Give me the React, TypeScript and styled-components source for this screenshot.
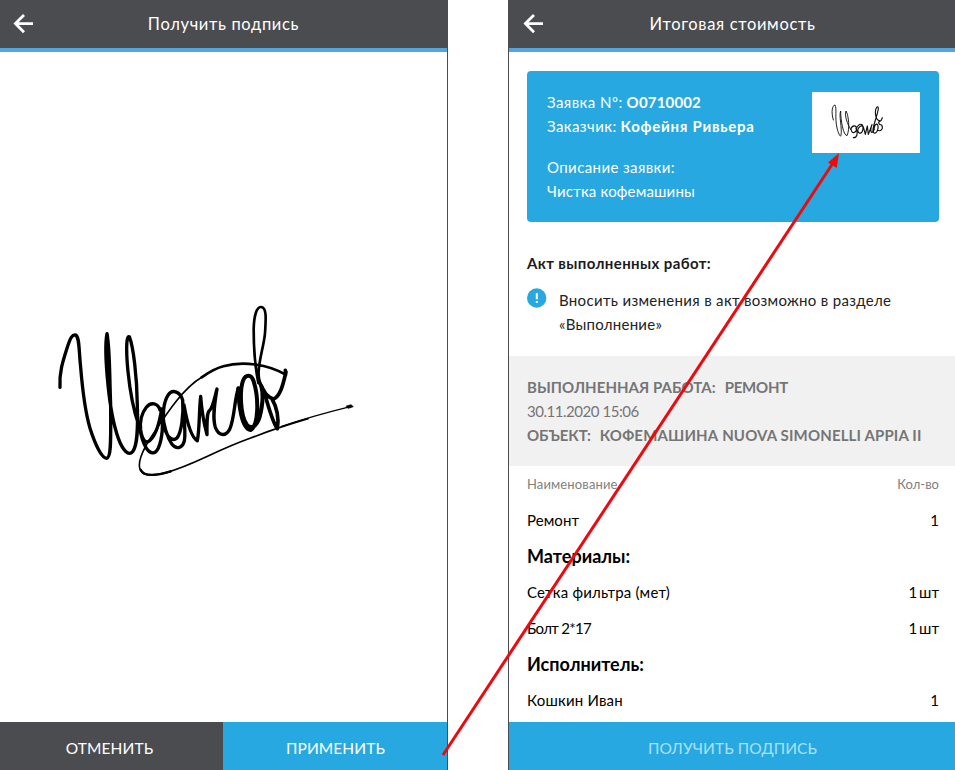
import React from 'react';
import styled, { createGlobalStyle } from 'styled-components';

const GlobalStyle = createGlobalStyle`
  * { box-sizing: border-box; }
  body {
    margin: 0;
    background: #fff;
    font-family: Lato, "Open Sans", sans-serif;
    font-size: 15px;
    line-height: 24px;
    color: #000;
    overflow: hidden;
  }
`;

const Page = styled.main`
  position: relative;
  display: grid;
  grid-template-columns: 448px 447px;
  column-gap: 60px;
  width: 955px;
  height: 770px;
  overflow: hidden;
`;

const Screen = styled.section<{ $edge: 'left' | 'right' }>`
  display: flex;
  flex-direction: column;
  min-width: 0;
  height: 770px;
  border-${(p) => p.$edge}: 1px solid #4b4c50;
`;

const TopBar = styled.header<{ $shift?: number }>`
  display: grid;
  grid-template-columns: 48px 1fr 48px;
  align-items: center;
  flex: none;
  height: 52px;
  padding-left: ${(p) => p.$shift ?? 0}px;
  background: #4b4c50;
  border-bottom: 4px solid #55a4dc;
  color: #fff;
`;

const BackButton = styled.button`
  display: flex;
  width: 48px;
  height: 48px;
  padding: 14px 0 0 13px;
  border: 0;
  background: none;
`;

const Title = styled.h1`
  margin: 0 0 1px;
  font-size: 16.5px;
  font-weight: 400;
  letter-spacing: 0.66px;
  text-align: center;
  white-space: nowrap;
`;

const Canvas = styled.div`
  flex: 1;
  padding: 243px 0 0 50px;
`;

const Actions = styled.footer`
  display: flex;
  flex: none;
  height: 48px;
`;

const Action = styled.button<{ $tone: 'dark' | 'blue'; $muted?: boolean; $width?: number }>`
  flex: ${(p) => (p.$width ? `0 0 ${p.$width}px` : 1)};
  padding: ${(p) => (p.$tone === 'dark' ? '4px 4px 0 0' : '4px 0 0 1px')};
  border: 0;
  font: inherit;
  font-size: 15.5px;
  letter-spacing: 0.1px;
  background: ${(p) => (p.$tone === 'dark' ? '#4b4c50' : '#28a8e0')};
  color: ${(p) => (p.$muted ? '#a9e2f8' : '#fff')};
`;

const Text = styled.span<{ $track?: number; $bold?: boolean }>`
  letter-spacing: ${(p) => p.$track ?? 0}px;
  font-weight: ${(p) => (p.$bold ? 700 : 400)};
  white-space: nowrap;
`;

const Card = styled.article`
  display: flex;
  justify-content: space-between;
  flex: none;
  height: 151px;
  margin: 19px 16px 0 18px;
  padding: 19px 19px 0 20px;
  border-radius: 4px;
  background: #28a8e0;
  color: #fff;
`;

const CardText = styled.div`
  display: flex;
  flex-direction: column;
`;

const CardLine = styled.div<{ $spaced?: boolean }>`
  display: flex;
  gap: 4px;
  height: 24px;
  margin-top: ${(p) => (p.$spaced ? 17 : 0)}px;
`;

const Thumbnail = styled.div`
  width: 108px;
  height: 61px;
  margin-top: 2px;
  background: #fff;
`;

const ActTitle = styled.h2`
  flex: none;
  margin: 29px 0 0 18px;
  font-size: 15px;
  line-height: 24px;
  letter-spacing: 0.38px;
  color: #1b1b1b;
`;

const Notice = styled.div`
  display: flex;
  flex: none;
  gap: 12px;
  height: 68px;
  margin: 13px 0 0 18px;
  color: #222;
`;

const NoticeText = styled.p`
  display: flex;
  flex-direction: column;
  margin: 0;
`;

const WorkInfo = styled.div`
  flex: none;
  height: 110px;
  padding: 19px 18px 0;
  background: #f1f1f1;
  color: #757575;
`;

const WorkLine = styled.div`
  display: flex;
  gap: 9px;
  height: 24px;
`;

const Table = styled.div`
  flex: 1;
  padding: 0 16px 0 18px;
`;

const Row = styled.div<{ $kind?: 'head' | 'group' }>`
  display: flex;
  justify-content: space-between;
  height: 36px;
  line-height: 36px;
  font-size: ${(p) => (p.$kind === 'head' ? 13 : p.$kind === 'group' ? 18 : 15)}px;
  color: ${(p) => (p.$kind === 'head' ? '#808080' : '#000')};
`;

const Quantity = styled.span`
  word-spacing: -2px;
`;

const Pointer = styled.svg`
  position: absolute;
  inset: 0;
  pointer-events: none;
`;

function BackIcon() {
  return (
    <svg width="20" height="20" viewBox="0 0 20 20" fill="none" stroke="#fff" strokeWidth="2.8">
      <path d="M20 9.6H2.5M11 1L2.4 9.6L11 18.2" />
    </svg>
  );
}

function InfoIcon() {
  return (
    <svg width="20" height="20" viewBox="0 0 20 20">
      <circle cx="9.7" cy="10" r="9.7" fill="#28a8e0" />
      <path d="M9.8 5V11.2M9.8 13V15" stroke="#fff" strokeWidth="2" />
    </svg>
  );
}

function Signature() {
  return (
    <svg width="310" height="190" viewBox="0 0 930 570" fill="none" stroke="#000" strokeLinecap="round" strokeLinejoin="round">
      <g strokeWidth="10">
        <path d="M30 277C27 235 38 200 52 157C61 128 68 117 77 120C89 128 86 160 92 218C98 290 104 345 120 400C136 450 155 489 170 490C185 488 182 425 182 330C178 230 180 165 171 116C164 150 168 210 174 270C181 340 189 385 205 430C219 468 236 484 248 470C263 450 264 400 262 330C261 245 250 155 238 125C226 120 230 190 234 230C240 290 252 350 266 390" />
        <path strokeWidth="7" d="M171 122C168 170 174 240 178 300" />
        <path d="M330 345C324 325 303 319 289 337C275 355 269 378 272 405C276 432 285 443 294 440C315 430 328 385 335 342C341 385 337 432 325 459C315 480 301 477 289 460C280 445 272 420 268 390" />
        <path d="M398 315C391 291 368 281 355 299C340 320 336 365 344 400C352 430 370 439 380 430C395 413 401 358 398 315C399 355 409 405 403 438C396 462 378 463 366 448C350 425 341 390 337 350M402 330C410 375 424 428 442 437C449 405 447 345 452 304C455 345 463 390 471 419C471 380 470 355 478 347C489 338 494 305 501 282C495 320 486 366 496 397C506 422 525 427 539 403C554 370 553 312 565 280" />
        <path strokeWidth="12" d="M565 280C566 330 575 402 602 405C626 391 627 310 611 259C604 237 587 237 579 257C569 286 570 360 590 388C602 404 620 396 629 366C637 335 641 302 634 274" />
        <path strokeWidth="8" d="M625 264C615 215 611 160 611 102C612 62 620 34 634 36C650 38 648 69 645 115C641 155 628 189 626 230C624 267 643 299 670 312" />
        <path strokeWidth="11" d="M626 258C639 281 646 306 671 312C692 303 700 264 708 231M641 285C651 321 667 381 682 401C688 370 680 335 666 312M706 226L707 238" />
      </g>
      <path strokeWidth="8" d="M707 239C655 208 577 197 520 214C497 220 475 233 455 247" />
      <path strokeWidth="5" d="M455 247C400 280 354 350 310 416C289 447 257 500 272 527C282 546 323 541 362 529" />
      <path strokeWidth="7" d="M272 524C282 546 323 541 362 529" />
      <path strokeWidth="5" d="M345 534C435 509 484 472 600 430C658 407 720 387 774 371" />
      <path strokeWidth="3.5" d="M695 394C775 367 835 351 904 334" />
      <path fill="#000" strokeWidth="2" d="M889 333L903 329L910 335L895 340Z" />
    </svg>
  );
}

function SmallSignature() {
  return (
    <svg width="108" height="61" viewBox="21 21 324 183" fill="none" stroke="#111" strokeLinecap="round" strokeLinejoin="round">
      <path strokeWidth="2.8" d="M85 105C77 78 83 60 90 60C96 69 89 97 96 129C101 149 107 158 108 151C112 129 101 92 107 78C107 107 115 151 126 152C135 133 131 91 123 78C117 89 128 120 137 133" />
      <path strokeWidth="3.5" d="M137 133C141 121 154 118 155 132C152 146 140 146 139 135M153 130C160 145 156 159 145 158M154 130C163 113 174 115 174 128C173 147 161 150 158 136C160 125 169 119 175 126L181 148L187 123L190 148L201 119C194 139 199 151 207 134" />
      <path strokeWidth="3.5" d="M207 134C209 112 221 113 219 130C215 149 203 148 204 133C207 111 216 96 220 72C220 59 211 66 211 83C212 98 216 109 228 107L232 98M228 107C217 110 220 120 230 120C236 132 227 140 218 136" />
    </svg>
  );
}

type Item = { name: string; track: number; qty?: string; kind?: 'head' | 'group' };

const items: Item[] = [
  { name: 'Наименование', track: 0.13, qty: 'Кол-во', kind: 'head' },
  { name: 'Ремонт', track: 0.08, qty: '1' },
  { name: 'Материалы:', track: 0.02, kind: 'group' },
  { name: 'Сетка фильтра (мет)', track: 0.2, qty: '1 шт' },
  { name: 'Болт 2*17', track: -0.7, qty: '1 шт' },
  { name: 'Исполнитель:', track: 0, kind: 'group' },
  { name: 'Кошкин Иван', track: 0.2, qty: '1' },
];

function Header({ title, shift }: { title: string; shift?: number }) {
  return (
    <TopBar $shift={shift}>
      <BackButton aria-label="Назад"><BackIcon /></BackButton>
      <Title>{title}</Title>
    </TopBar>
  );
}

export default function App() {
  return (
    <>
      <GlobalStyle />
      <Page>
        <Screen $edge="right">
          <Header title="Получить подпись" />
          <Canvas><Signature /></Canvas>
          <Actions>
            <Action $tone="dark" $width={223}>ОТМЕНИТЬ</Action>
            <Action $tone="blue">ПРИМЕНИТЬ</Action>
          </Actions>
        </Screen>

        <Screen $edge="left">
          <Header title="Итоговая стоимость" shift={1} />
          <Card>
            <CardText>
              <CardLine>
                <Text $track={0.45}>Заявка Nº:</Text>
                <Text $bold $track={0.17}>O0710002</Text>
              </CardLine>
              <CardLine>
                <Text $track={0.42}>Заказчик:</Text>
                <Text $bold $track={0.75}>Кофейня Ривьера</Text>
              </CardLine>
              <CardLine $spaced><Text $track={0.4}>Описание заявки:</Text></CardLine>
              <CardLine><Text $track={0.18}>Чистка кофемашины</Text></CardLine>
            </CardText>
            <Thumbnail><SmallSignature /></Thumbnail>
          </Card>
          <ActTitle>Акт выполненных работ:</ActTitle>
          <Notice>
            <InfoIcon />
            <NoticeText>
              <Text $track={0.32}>Вносить изменения в акт возможно в разделе</Text>
              <Text $track={0.25}>«Выполнение»</Text>
            </NoticeText>
          </Notice>
          <WorkInfo>
            <WorkLine>
              <Text $bold $track={0.05}>ВЫПОЛНЕННАЯ РАБОТА:</Text>
              <Text $bold $track={-0.24}>РЕМОНТ</Text>
            </WorkLine>
            <WorkLine><Text $track={-0.46}>30.11.2020 15:06</Text></WorkLine>
            <WorkLine>
              <Text $bold $track={-0.05}>ОБЪЕКТ:</Text>
              <Text $bold $track={0.15}>КОФЕМАШИНА NUOVA SIMONELLI APPIA II</Text>
            </WorkLine>
          </WorkInfo>
          <Table>
            {items.map((item) => (
              <Row key={item.name} $kind={item.kind}>
                <Text $track={item.track} $bold={item.kind === 'group'}>{item.name}</Text>
                {item.qty && <Quantity>{item.qty}</Quantity>}
              </Row>
            ))}
          </Table>
          <Actions>
            <Action $tone="blue" $muted>ПОЛУЧИТЬ ПОДПИСЬ</Action>
          </Actions>
        </Screen>

        <Pointer width="955" height="770" viewBox="0 0 955 770">
          <path d="M443 755L833 163" stroke="#ec0a0e" strokeWidth="3" />
          <path d="M839 153L828 162.5L836.8 168Z" fill="#f00a0a" />
        </Pointer>
      </Page>
    </>
  );
}
